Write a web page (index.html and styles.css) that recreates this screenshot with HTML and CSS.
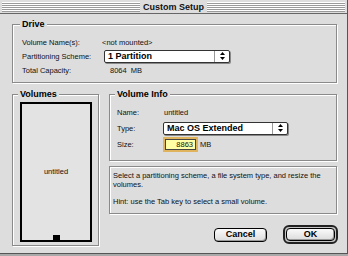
FILE: index.html
```html
<!DOCTYPE html>
<html lang="en">
<head>
	<meta charset="UTF-8">
	<title>Custom Setup</title>
	<link rel="stylesheet" href="styles.css">
</head>
<body>

	<div class="window">
		<div class="titlebar">
			<span class="stripes"></span>
			<span class="title">Custom Setup</span>
			<span class="stripes"></span>
		</div>

		<div class="content">
			<fieldset class="group drive">
				<legend>Drive</legend>
				<div class="row">
					<span class="label">Volume Name(s):</span>
					<span>&lt;not mounted&gt;</span>
				</div>
				<div class="row">
					<span class="label">Partitioning Scheme:</span>
					<div class="popup">
						<span class="text">1 Partition</span>
						<span class="arrows">
							<svg width="5" height="8" viewBox="0 0 5 8"><polygon points="2.5,0 5,3 0,3"/><polygon points="0,5 5,5 2.5,8"/></svg>
						</span>
					</div>
				</div>
				<div class="row">
					<span class="label">Total Capacity:</span>
					<span class="capacity">8064&nbsp;&nbsp;MB</span>
				</div>
			</fieldset>

			<div class="lower">
				<fieldset class="group volumes">
					<legend>Volumes</legend>
					<div class="map">
						<span class="name">untitled</span>
						<i class="handle"></i>
					</div>
				</fieldset>

				<div class="side">
					<fieldset class="group info">
						<legend>Volume Info</legend>
						<div class="row">
							<span class="label">Name:</span>
							<span>untitled</span>
						</div>
						<div class="row">
							<span class="label">Type:</span>
							<div class="popup type">
								<span class="text">Mac OS Extended</span>
								<span class="arrows">
									<svg width="5" height="8" viewBox="0 0 5 8"><polygon points="2.5,0 5,3 0,3"/><polygon points="0,5 5,5 2.5,8"/></svg>
								</span>
							</div>
						</div>
						<div class="row">
							<span class="label">Size:</span>
							<span class="field">8863</span>
							<span class="unit">MB</span>
						</div>
					</fieldset>

					<div class="help">
						<p>Select a partitioning scheme, a file system type, and resize the volumes.</p>
						<p>Hint: use the Tab key to select a small volume.</p>
					</div>

					<div class="buttons">
						<button class="btn">Cancel</button>
						<span class="default"><button class="btn">OK</button></span>
					</div>
				</div>
			</div>
		</div>
	</div>

</body>
</html>
```

FILE: styles.css
```css
* {
	padding: 0;
	margin: 0;
	box-sizing: border-box;
}

body {
	background-color: #a9a9a9;
	font-family: "Liberation Sans", Arial, sans-serif;
	font-size: 7.5px;
	color: #111;
}

.window {
	width: 348px;
	height: 254px;
	background-color: #dddddd;
	border-right: 1px solid #555;
	border-bottom: 1px solid #555;
	display: flex;
	flex-direction: column;
}

/* 标题栏 条纹 */
.titlebar {
	height: 14px;
	padding: 0 2px;
	display: flex;
	align-items: center;
	border-bottom: 1px solid #666;
}

.stripes {
	flex: 1;
	height: 10px;
	background: repeating-linear-gradient(to bottom, #fff 0 1px, #9a9a9a 1px 2px);
}

.title {
	width: 67px;
	text-align: center;
	font-size: 9px;
	font-weight: bold;
	line-height: 12px;
}

.content {
	flex: 1;
	padding: 5px 10px 7px 12px;
	display: flex;
	flex-direction: column;
}

.group {
	border: 1px solid #8a8a8a;
	box-shadow: 1px 1px 0 #fff, inset 1px 1px 0 #fff;
	min-width: 0;
}

.group legend {
	font-size: 9px;
	font-weight: bold;
	line-height: 11px;
	padding: 0 2px;
	margin-left: -2px;
	background-color: #dddddd;
	color: #000;
}

.row {
	display: flex;
	align-items: center;
	height: 14px;
}

.label {
	flex: none;
}

.drive {
	padding: 5px 8px 5px 9px;
}

.drive .label {
	width: 80px;
}

.capacity {
	padding-left: 8px;
}

/* 弹出菜单 */
.popup {
	width: 126px;
	height: 13px;
	margin-left: 2px;
	display: flex;
	background-color: #fff;
	border: 1px solid #333;
	border-radius: 2px;
	box-shadow: 1px 1px 0 #888;
	font-size: 9px;
	font-weight: bold;
	color: #000;
}

.popup .text {
	flex: 1;
	padding-left: 3px;
	line-height: 11px;
}

.popup .arrows {
	width: 15px;
	border-left: 1px solid #999;
	display: flex;
	align-items: center;
	justify-content: center;
}

.lower {
	flex: 1;
	display: flex;
	gap: 10px;
	margin-top: 6px;
}

.volumes {
	width: 87px;
	flex: none;
	padding: 2px 6px 3px 7px;
	display: flex;
}

.map {
	flex: 1;
	border: 2px solid #000;
	background-color: #e3e3e3;
	display: flex;
	flex-direction: column;
	align-items: center;
}

.map .name {
	margin: auto 0;
	padding-top: 4px;
}

.map .handle {
	width: 7px;
	height: 5px;
	background-color: #000;
}

.side {
	flex: 1;
	display: flex;
	flex-direction: column;
}

.info {
	padding: 5px 8px 9px 7px;
	display: flex;
	flex-direction: column;
	gap: 2px;
}

.info .label {
	width: 47px;
}

.popup.type {
	width: 125px;
	margin-left: -1px;
}

.field {
	width: 31px;
	height: 11px;
	margin-left: 1px;
	border: 1px solid #444;
	background-color: #ffffa6;
	box-shadow: 0 0 0 2px #e0b45c;
	text-align: right;
	padding-right: 2px;
	line-height: 9px;
}

.unit {
	margin-left: 4px;
}

.help {
	margin-top: 5px;
	height: 48px;
	border: 1px solid #8a8a8a;
	box-shadow: 1px 1px 0 #fff, inset 1px 1px 0 #fff;
	padding: 4px 3px;
	line-height: 9px;
}

.help p {
	margin-bottom: 8px;
}

.buttons {
	margin-top: 11px;
	margin-right: -1px;
	display: flex;
	justify-content: flex-end;
	align-items: center;
	gap: 16px;
}

.btn {
	height: 13px;
	border: 1px solid #000;
	border-radius: 4px;
	background: linear-gradient(#fafafa, #dcdcdc);
	box-shadow: inset -1px -1px 0 #999;
	font-family: "Liberation Sans", Arial, sans-serif;
	font-size: 9px;
	font-weight: bold;
	color: #000;
	line-height: 11px;
}

.buttons > .btn {
	width: 53px;
	height: 14px;
}

.default {
	width: 55px;
	height: 19px;
	border: 2px solid #222;
	border-radius: 6px;
	padding: 1px;
	background-color: #c4c4c4;
	display: flex;
}

.default .btn {
	flex: 1;
}
```
